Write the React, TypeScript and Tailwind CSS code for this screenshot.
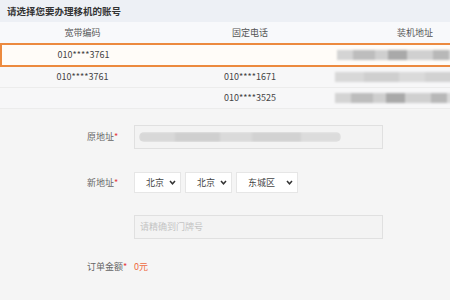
import React from "react";

const orange = "border-[#ec8a3f]";

function Blur({ w, tone = "mixed" }: { w: number; tone?: "mixed" | "light" }) {
  const blocks =
    tone === "light"
      ? ["bg-[#d8d8d8] w-[18%]", "bg-[#cfcfcf] w-[22%]", "bg-[#dadada] w-[16%]", "bg-[#d2d2d2] w-[24%]", "bg-[#dcdcdc] w-[20%]"]
      : ["bg-[#d4d4d4] w-[10%]", "bg-[#bdbdbd] w-[14%]", "bg-[#cfcfcf] w-[8%]", "bg-[#a9a9a9] w-[12%]", "bg-[#d0d0d0] w-[16%]", "bg-[#b8b8b8] w-[10%]", "bg-[#dadada] w-[14%]", "bg-[#c4c4c4] w-[16%]"];
  return (
    <div className="flex h-[10px] overflow-hidden blur-[1px]" style={{ width: w }}>
      {blocks.map((c, i) => (
        <div key={i} className={`h-full ${c}`} />
      ))}
    </div>
  );
}

function Chevron() {
  return (
    <svg width="7" height="5" viewBox="0 0 7 5" className="shrink-0">
      <polyline points="1,1 3.5,3.8 6,1" fill="none" stroke="#333" strokeWidth="1.5" />
    </svg>
  );
}

function FakeSelect({ label, w }: { label: string; w: string }) {
  return (
    <div className={`flex h-[21px] items-center justify-between border border-[#e6e6e6] bg-white pl-[11px] pr-[4px] ${w}`}>
      <span className="text-[9px] text-[#444]">{label}</span>
      <Chevron />
    </div>
  );
}

const rows = [
  { code: "010****3761", phone: "", selected: true },
  { code: "010****3761", phone: "010****1671", selected: false, light: true },
  { code: "", phone: "010****3525", selected: false },
];

export default function App() {
  return (
    <div className="h-[300px] w-[450px] overflow-hidden bg-[#f5f5f5] font-['Noto_Sans_CJK_SC','Noto_Sans',sans-serif] text-[#444]">
      <div className="flex h-[22px] items-center bg-[#edf0f5] px-[7px] text-[9.5px] font-semibold text-[#333]">
        请选择您要办理移机的账号
      </div>

      <div className="w-[495px]">
        <div className="grid h-[21px] grid-cols-[165px_170px_160px] items-center bg-[#f8f9fb] text-[9px] text-[#555]">
          <div className="text-center">宽带编码</div>
          <div className="text-center">固定电话</div>
          <div className="text-center">装机地址</div>
        </div>
        {rows.map((r, i) => (
          <div
            key={i}
            className={
              r.selected
                ? `grid h-[24px] grid-cols-[165px_170px_160px] items-center border-2 ${orange} bg-[#fffcf8] text-[9px]`
                : "grid h-[21px] grid-cols-[165px_170px_160px] items-center border-b border-[#ececec] bg-[#f7f7f8] text-[9px]"
            }
          >
            <div className={r.selected ? "pr-[2px] text-center" : "text-center"}>{r.code}</div>
            <div className="text-center">{r.phone}</div>
            <div className="flex pl-[0px]">
              <Blur w={160} tone={r.light ? "light" : "mixed"} />
            </div>
          </div>
        ))}
      </div>

      <div className="mt-[16px] flex flex-col pl-[87px]">
        <div className="flex items-center">
          <div className="w-[47px] text-[9px] text-[#666]">
            原地址<span className="text-[#e4393c]">*</span>
          </div>
          <div className="flex h-[24px] w-[249px] items-center border border-[#e0e0e0] bg-[#f3f3f3] pl-[4px]">
            <div className="overflow-hidden rounded-full">
              <Blur w={202} tone="light" />
            </div>
          </div>
        </div>

        <div className="mt-[23px] flex items-center">
          <div className="w-[47px] text-[9px] text-[#666]">
            新地址<span className="text-[#e4393c]">*</span>
          </div>
          <div className="flex gap-[4px]">
            <FakeSelect label="北京" w="w-[47px]" />
            <FakeSelect label="北京" w="w-[47px]" />
            <FakeSelect label="东城区" w="w-[62px]" />
          </div>
        </div>

        <div className="mt-[22px] flex items-center">
          <div className="w-[47px]" />
          <div className="flex h-[24px] w-[249px] items-center border border-[#e0e0e0] bg-[#f3f3f3] pl-[5px] text-[9px] text-[#c4c4c4]">
            请精确到门牌号
          </div>
        </div>

        <div className="mt-[21px] flex items-center text-[9px]">
          <div className="w-[47px] text-[#666]">
            订单金额<span className="text-[#e4393c]">*</span>
          </div>
          <div className="text-[#ef6b3f]">0元</div>
        </div>
      </div>
    </div>
  );
}
